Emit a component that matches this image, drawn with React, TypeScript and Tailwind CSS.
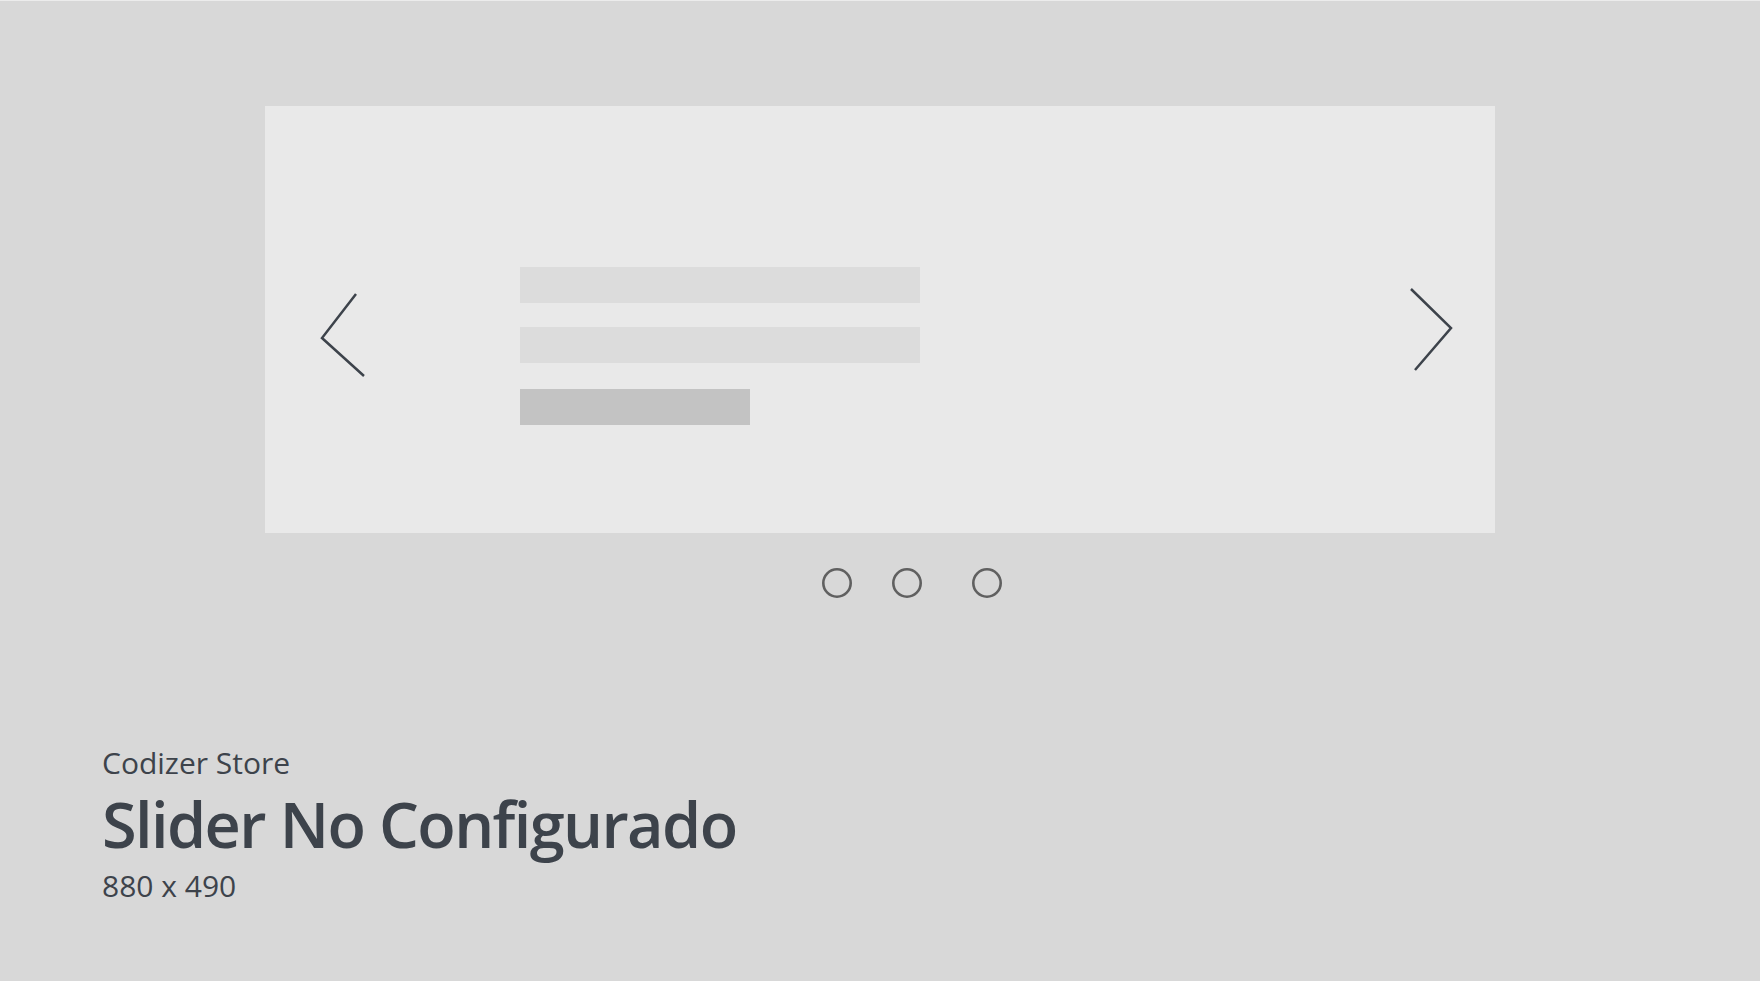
import React from "react";

export default function App() {
  return (
    <div
      className="w-[1760px] h-[981px] bg-[#d8d8d8] border-t border-[#ececec] overflow-hidden flex flex-col"
      style={{ fontFamily: '"Open Sans", "Noto Sans", sans-serif' }}
    >
      <div className="w-[1230px] mx-auto mt-[105px] flex flex-col">
        <div className="h-[427px] bg-[#e9e9e9] flex flex-row items-start pl-[54px] pr-[38px]">
          <svg width="50" height="90" viewBox="0 0 50 90" className="mt-[184px] shrink-0">
            <polyline points="37,4 3,48 45,86" fill="none" stroke="#3d434b" strokeWidth="2.5" strokeLinecap="butt" strokeLinejoin="miter" />
          </svg>
          <div className="ml-[151px] mt-[161px] flex flex-col w-[400px]">
            <div className="h-[36px] w-[400px] bg-[#dcdcdc]" />
            <div className="h-[36px] w-[400px] bg-[#dcdcdc] mt-[24px]" />
            <div className="h-[36px] w-[230px] bg-[#c3c3c3] mt-[26px]" />
          </div>
          <svg width="50" height="90" viewBox="0 0 50 90" className="mt-[180px] ml-auto shrink-0">
            <polyline points="4,3 44,42 8,84" fill="none" stroke="#3d434b" strokeWidth="2.5" strokeLinecap="butt" strokeLinejoin="miter" />
          </svg>
        </div>
        <div className="flex flex-row pl-[557px] mt-[35px]">
          <svg width="30" height="30" viewBox="0 0 30 30" className="shrink-0">
            <circle cx="15" cy="15" r="13.7" fill="none" stroke="#606060" strokeWidth="2.6" />
          </svg>
          <svg width="30" height="30" viewBox="0 0 30 30" className="shrink-0 ml-[40px]">
            <circle cx="15" cy="15" r="13.7" fill="none" stroke="#606060" strokeWidth="2.6" />
          </svg>
          <svg width="30" height="30" viewBox="0 0 30 30" className="shrink-0 ml-[50px]">
            <circle cx="15" cy="15" r="13.7" fill="none" stroke="#606060" strokeWidth="2.6" />
          </svg>
        </div>
      </div>
      <div className="pl-[102px] mt-[150px] flex flex-col text-[#3d434b]">
        <div className="text-[30px] leading-[29px]">Codizer Store</div>
        <div className="text-[63px] leading-[63px] font-semibold tracking-[-1.6px] mt-[15px]">Slider No Configurado</div>
        <div className="text-[30px] leading-[29px] mt-[16px]">880 x 490</div>
      </div>
    </div>
  );
}
